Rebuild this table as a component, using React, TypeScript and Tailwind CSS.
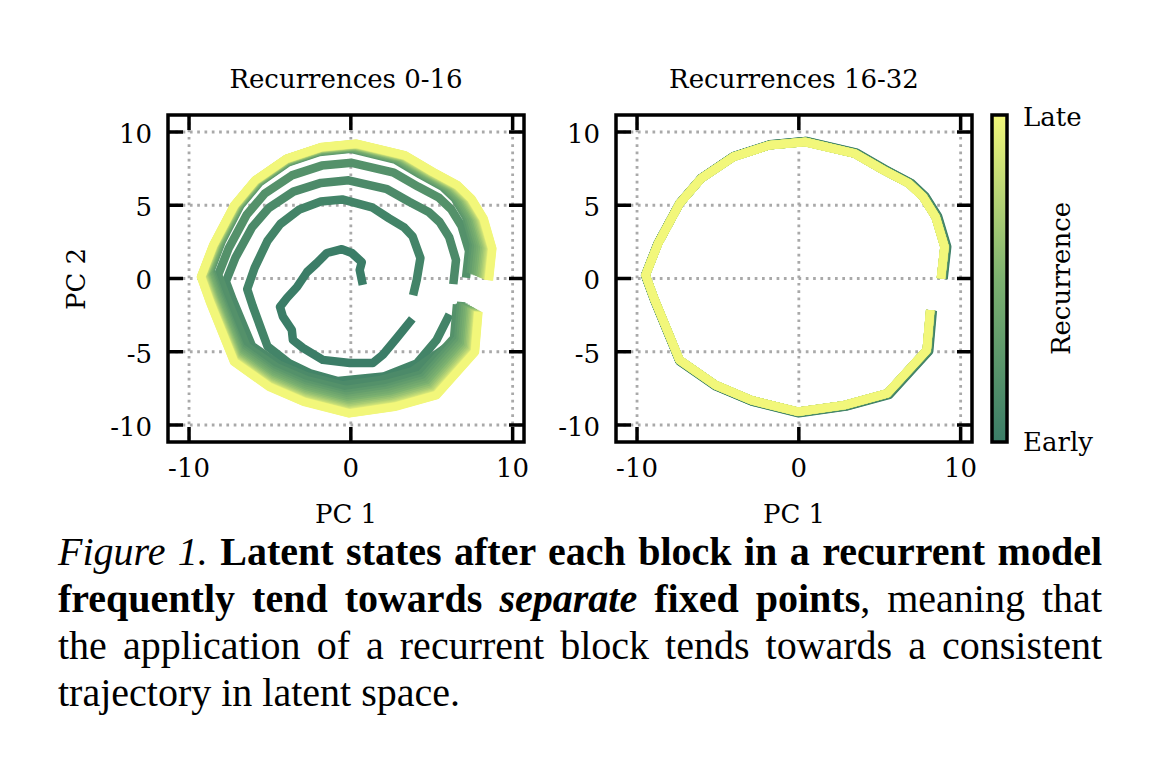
type Pt = [number, number];

// outer ring shape in PC space, traced from the late recurrences
const BASE: Pt[] = [
  [8.78, 0], [9.0, 2.16], [8.45, 4.2], [7.68, 5.57], [6.8, 6.48], [5.24, 7.39],
  [3.47, 8.52], [0.38, 9.32], [-1.84, 9.09], [-4.05, 8.3], [-6.04, 6.82],
  [-7.37, 5.11], [-8.7, 2.39], [-9.47, 0.23], [-8.9, -1.48], [-7.37, -5.57],
  [-5.15, -7.27], [-2.94, -8.3], [-0.07, -9.09], [2.81, -8.64], [5.46, -7.84],
  [7.9, -4.89], [8.12, -2.16],
];

const INNER: Pt[] = [
  [0.74, -0.44], [0.55, 0.58], [0.68, 1.12], [0.06, 1.74], [-0.56, 2.0],
  [-1.48, 1.74], [-2.1, 1.06], [-2.7, 0.44], [-3.33, -0.58], [-3.95, -1.33],
  [-4.38, -1.94], [-4.2, -2.6], [-3.65, -3.5], [-3.58, -4.2], [-2.96, -4.74],
  [-1.73, -5.56], [-0.06, -5.77], [1.36, -5.77], [1.98, -5.2], [2.84, -4.06],
  [3.8, -2.75],
];

const STOPS = [
  [59, 125, 103],
  [125, 178, 112],
  [242, 247, 122],
];

function cmap(t: number) {
  const seg = t < 0.5 ? 0 : 1;
  const f = t < 0.5 ? t / 0.5 : (t - 0.5) / 0.5;
  const a = STOPS[seg];
  const b = STOPS[seg + 1];
  const c = a.map((v, i) => Math.round(v + (b[i] - v) * f));
  return `rgb(${c[0]},${c[1]},${c[2]})`;
}

function ring(sx: number, sy: number, dx: number, dy: number): Pt[] {
  return BASE.map(([x, y]) => [x * sx + dx, y * sy + dy]);
}

type Line = { pts: Pt[]; color: string };

const leftLines: Line[] = (() => {
  // second recurrence: drifts right at the lower end
  const b = ring(0.596, 0.674, -0.76, -0.88);
  const ringB: Pt[] = [
    [3.85, -1.15], [4.07, -0.1], [4.3, 1.4],
    ...b.slice(3, 19),
    [2.0, -6.7], [4.07, -5.8], [5.3, -4.2], [6.1, -2.45],
  ];
  const c = ring(0.77, 0.76, -0.43, -0.38);
  const ringC: Pt[] = [...c.slice(0, 21), [6.4, -4.3], [6.75, -1.75]];

  const out: Line[] = [
    { pts: INNER, color: cmap(0) },
    { pts: ringB, color: cmap(1 / 16) },
    { pts: ringC, color: cmap(2 / 16) },
    { pts: ring(0.839, 0.842, -0.25, 0.05), color: cmap(3 / 16) },
  ];
  for (let k = 4; k <= 16; k++) {
    const u = (k - 4) / 12;
    const f = 1 - Math.pow(1 - u, 1.6);
    out.push({
      pts: ring(0.88 + 0.095 * f, 0.91 + 0.09 * f, -0.32 + 0.29 * f, 0.37 - 0.49 * f),
      color: cmap(k / 16),
    });
  }
  return out;
})();

const rightLines: Line[] = Array.from({ length: 17 }, (_, k) => {
  const u = k / 16;
  const e = Math.pow(1 - u, 4);
  return { pts: ring(1 + 0.011 * e, 1 + 0.01 * e, 0.07 * e, -0.02 * e), color: cmap(u) };
});

// axes geometry, shared by both panels (local svg coords)
const SX = 16.18;
const SY = 14.65;
const XMIN = -11.3;
const YMAX = 11.16;
const TOP = 65;
const AW = 356;
const AH = 327;

function Axes({ left, title, lines, ylabel }: { left: number; title: string; lines: Line[]; ylabel?: boolean }) {
  const X = (x: number) => left + (x - XMIN) * SX;
  const Y = (y: number) => TOP + (YMAX - y) * SY;
  const bottom = TOP + AH;
  const right = left + AW;
  const d = (pts: Pt[]) =>
    pts.map(([x, y], i) => `${i ? 'L' : 'M'}${X(x).toFixed(1)} ${Y(y).toFixed(1)}`).join(' ');
  const xt = [-10, 0, 10];
  const yt = [10, 5, 0, -5, -10];
  const cx = left + AW / 2;

  return (
    <>
      <text x={cx} y={38} textAnchor="middle">{title}</text>

      {/* grid */}
      <g stroke="#a9a9a9" strokeWidth={2.8} strokeDasharray="2.7 4.6">
        {xt.map((v) => (
          <line key={`gx${v}`} x1={X(v)} x2={X(v)} y1={TOP} y2={bottom} />
        ))}
        {yt.map((v) => (
          <line key={`gy${v}`} x1={left} x2={right} y1={Y(v)} y2={Y(v)} />
        ))}
      </g>

      {/* trajectories */}
      <g fill="none" strokeWidth={8.5} strokeLinejoin="round" strokeLinecap="butt">
        {lines.map((l, i) => (
          <path key={i} d={d(l.pts)} stroke={l.color} />
        ))}
      </g>

      {/* spines + inward ticks */}
      <g stroke="#000" strokeWidth={3.5}>
        <rect x={left} y={TOP} width={AW} height={AH} fill="none" />
        {xt.map((v) => (
          <g key={`tx${v}`}>
            <line x1={X(v)} x2={X(v)} y1={TOP} y2={TOP + 15} />
            <line x1={X(v)} x2={X(v)} y1={bottom} y2={bottom - 15} />
          </g>
        ))}
        {yt.map((v) => (
          <g key={`ty${v}`}>
            <line x1={left} x2={left + 15} y1={Y(v)} y2={Y(v)} />
            <line x1={right} x2={right - 15} y1={Y(v)} y2={Y(v)} />
          </g>
        ))}
      </g>

      {xt.map((v) => (
        <text key={`lx${v}`} x={X(v)} y={427} textAnchor="middle">{v}</text>
      ))}
      {yt.map((v) => (
        <text key={`ly${v}`} x={left - 16} y={Y(v) + 11} textAnchor="end">{v}</text>
      ))}

      <text x={cx} y={473} textAnchor="middle">PC 1</text>
      {ylabel && (
        <text x={35} y={229} textAnchor="middle" transform="rotate(-90 35 229)">PC 2</text>
      )}
    </>
  );
}

function Colorbar() {
  return (
    <svg width={130} height={480} className="font-['DejaVu_Serif',serif] text-[26px]">
      <defs>
        <linearGradient id="cbar" x1="0" y1="1" x2="0" y2="0">
          <stop offset="0" stopColor={cmap(0)} />
          <stop offset="0.5" stopColor={cmap(0.5)} />
          <stop offset="1" stopColor={cmap(1)} />
        </linearGradient>
      </defs>
      <rect x={12} y={TOP} width={15} height={AH} fill="url(#cbar)" stroke="#000" strokeWidth={3.5} />
      <text x={43} y={76}>Late</text>
      <text x={43} y={401}>Early</text>
      <text x={90} y={228.5} textAnchor="middle" transform="rotate(-90 90 228.5)">Recurrence</text>
    </svg>
  );
}

export default function App() {
  return (
    <div className="w-[1160px] h-[768px] bg-white pt-[50px] text-black">
      {/* figure */}
      <div className="flex h-[478px] pl-[50px]">
        <svg width={500} height={480} className="font-['DejaVu_Serif',serif] text-[26px]">
          <Axes left={118} title="Recurrences 0-16" lines={leftLines} ylabel />
        </svg>
        <svg width={430} height={480} className="font-['DejaVu_Serif',serif] text-[26px]">
          <Axes left={66} title="Recurrences 16-32" lines={rightLines} />
        </svg>
        <Colorbar />
      </div>

      {/* caption */}
      <p className="ml-[58px] w-[1044px] font-['Liberation_Serif',serif] text-[40px] leading-[47px]">
        <span className="block text-justify [text-align-last:justify]">
          <i>Figure 1.</i> <b>Latent states after each block in a recurrent model</b>
        </span>
        <span className="block text-justify [text-align-last:justify]">
          <b>frequently tend towards <i>separate</i> fixed points</b>, meaning that
        </span>
        <span className="block text-justify [text-align-last:justify]">
          the application of a recurrent block tends towards a consistent
        </span>
        <span className="block">trajectory in latent space.</span>
      </p>
    </div>
  );
}
